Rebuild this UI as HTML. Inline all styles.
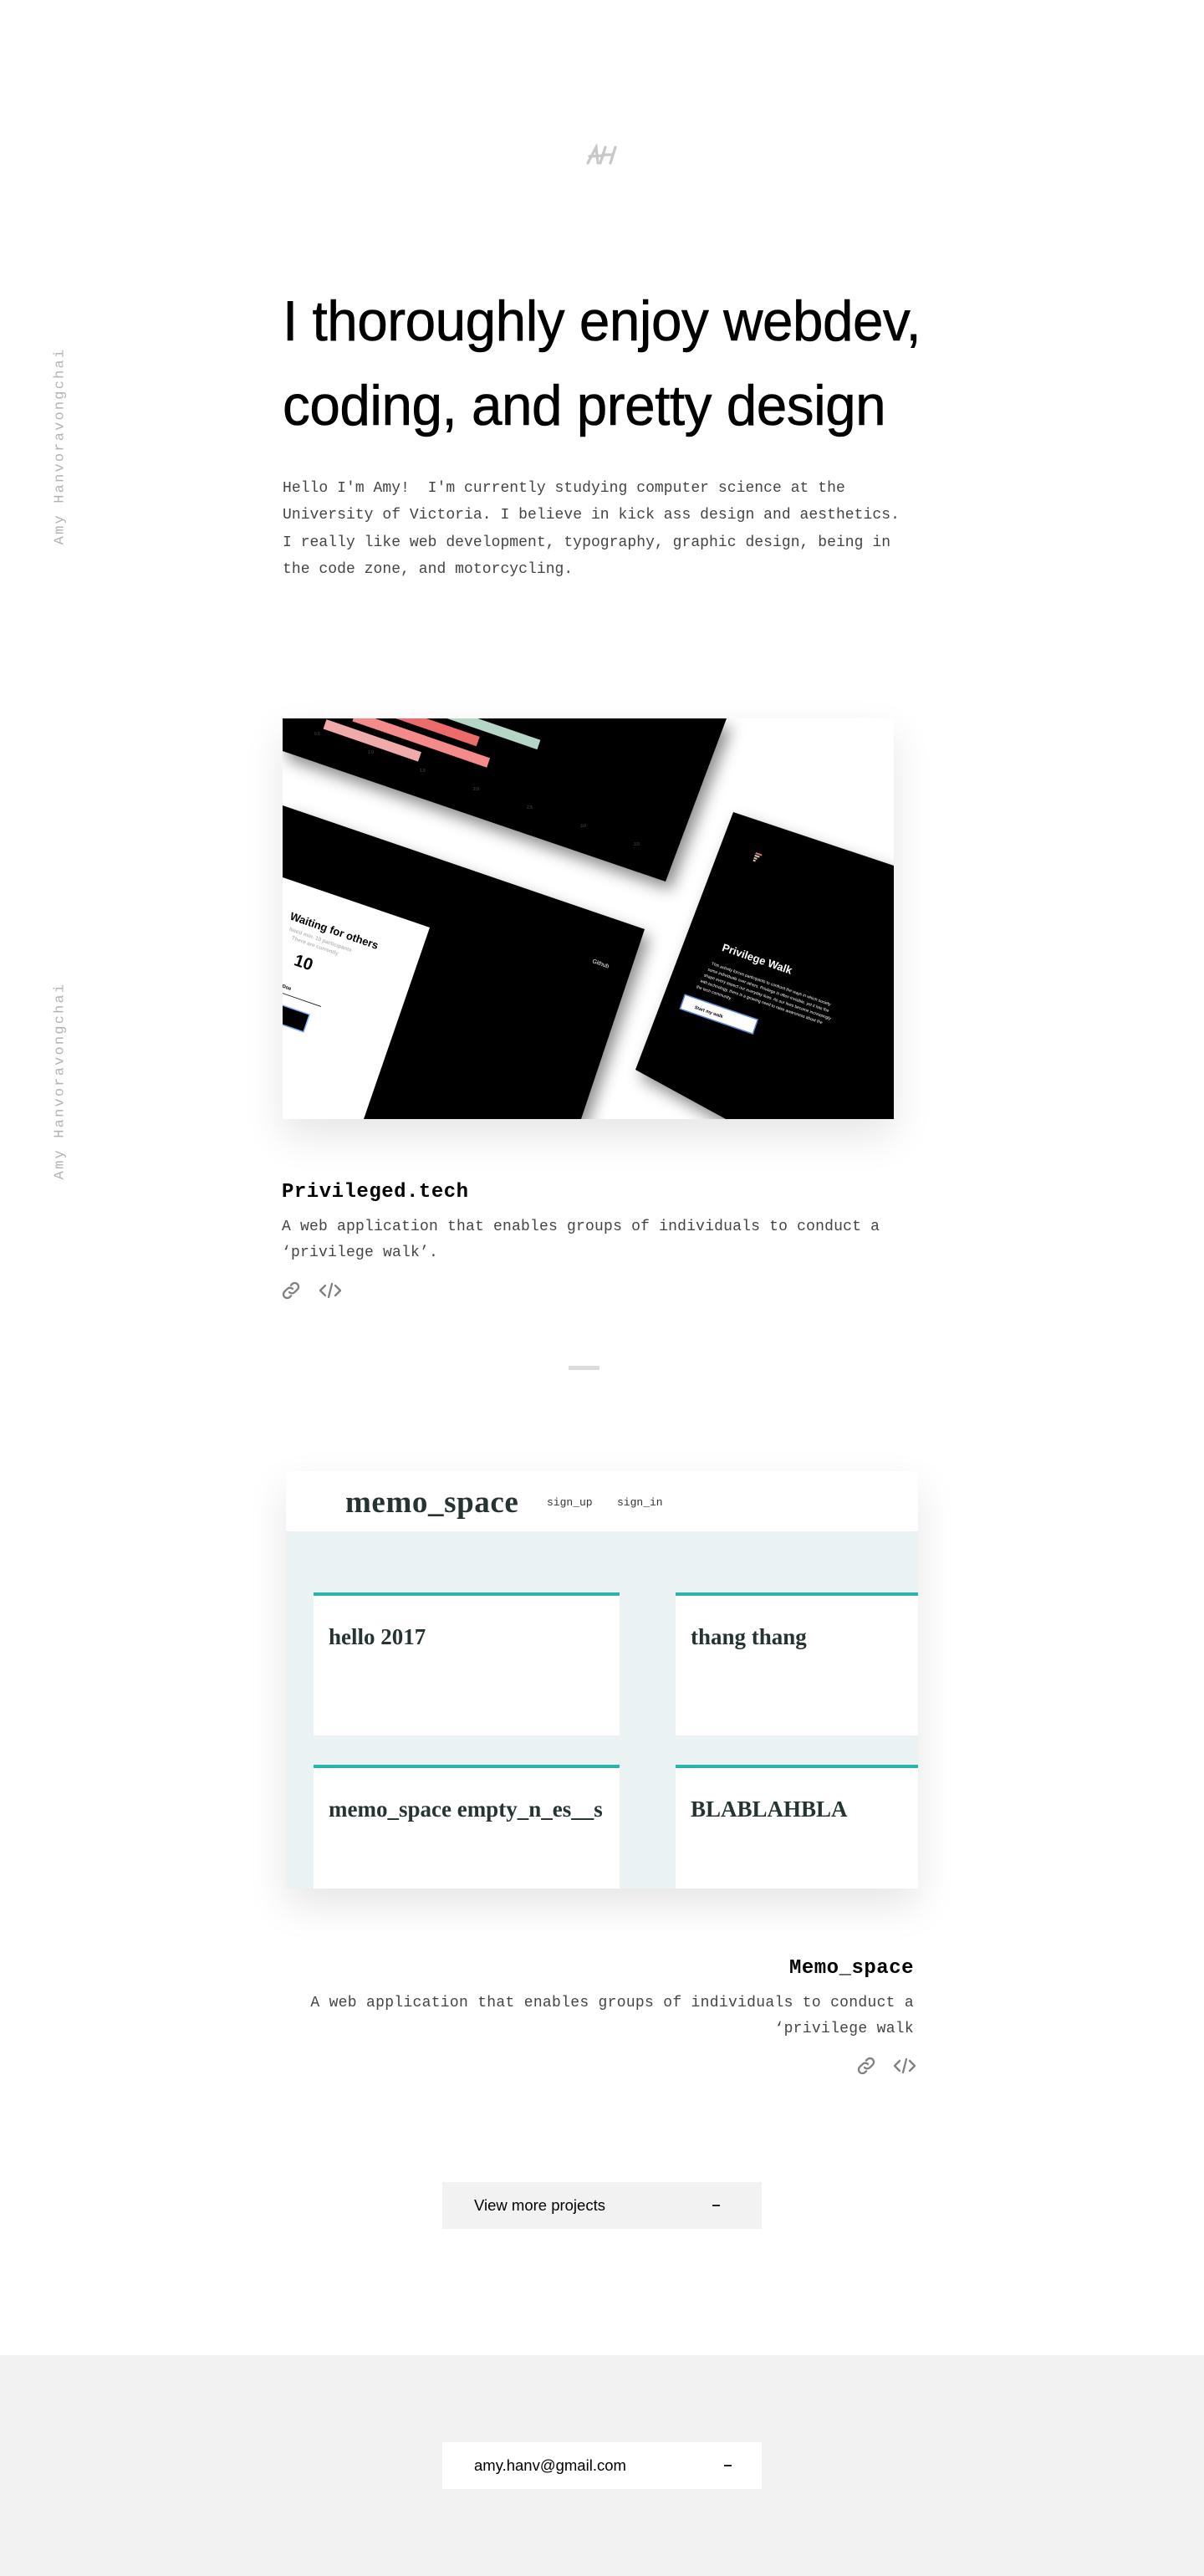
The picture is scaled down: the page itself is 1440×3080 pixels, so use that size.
<!DOCTYPE html>
<html><head><meta charset="utf-8">
<style>
*{margin:0;padding:0;box-sizing:border-box}
html,body{width:1440px;height:3080px;background:#fff;overflow:hidden}
body{position:relative;font-family:"Liberation Sans",sans-serif;color:#000}
.abs{position:absolute}
.vname{position:absolute;font-family:"Liberation Mono",monospace;font-size:17px;letter-spacing:2.2px;color:#b3b3b3;white-space:nowrap;width:240px;text-align:center;transform:rotate(-90deg);transform-origin:center center}
h1{position:absolute;left:338px;top:334px;font-weight:normal;font-size:68px;line-height:101px;white-space:nowrap;transform:scaleX(0.965);transform-origin:left top;letter-spacing:-0.5px;-webkit-text-stroke:0.6px #000}
.para{position:absolute;left:338px;top:568px;font-family:"Liberation Mono",monospace;font-size:18px;line-height:32.3px;color:#444;white-space:pre;letter-spacing:0.05px}
.ptitle{font-family:"Liberation Mono",monospace;font-size:24px;font-weight:bold;letter-spacing:0.5px;position:absolute;white-space:nowrap}
.pdesc{font-family:"Liberation Mono",monospace;font-size:18px;line-height:31px;color:#444;position:absolute;white-space:pre;letter-spacing:0.2px}
.btn{position:absolute;left:529px;width:382px;height:56px;font-size:18.5px;line-height:56px;padding-left:38px}
.btn .dash{position:absolute;left:323px;top:27px;width:9px;height:1.5px;background:#222}
.serif{font-family:"Liberation Serif",serif;font-weight:bold;color:#263333}
.card{position:absolute;background:#fff;border-top:4px solid #2bb3ae}
.card span{position:absolute;left:18px;font-size:27px;white-space:nowrap}
</style></head><body>

<svg class="abs" style="left:700px;top:172px" width="40" height="26" viewBox="0 0 40 26">
<g stroke="#c8c8c8" stroke-width="3.2" fill="none" stroke-linecap="round">
<path d="M3 23 L13 4 L15 23"/><path d="M5 15 L22 14"/><path d="M24 4 L18 23"/><path d="M36 4 L30 23"/><path d="M21 13 L33 13"/>
</g></svg>

<div class="vname" style="left:-48px;top:524px">Amy Hanvoravongchai</div>
<div class="vname" style="left:-48px;top:1283px">Amy Hanvoravongchai</div>

<h1>I thoroughly enjoy webdev,<br>coding, and pretty design</h1>

<div class="para">Hello I'm Amy!  I'm currently studying computer science at the
University of Victoria. I believe in kick ass design and aesthetics.
I really like web development, typography, graphic design, being in
the code zone, and motorcycling.</div>

<div class="abs" style="left:338px;top:859px;width:731px;height:479px;background:#fff;box-shadow:0 20px 45px rgba(0,0,0,0.10);overflow:hidden">
<svg width="731" height="479" viewBox="0 0 731 479">
<defs><filter id="sh" x="-20%" y="-20%" width="140%" height="140%"><feDropShadow dx="6" dy="10" stdDeviation="9" flood-opacity="0.45"/></filter></defs>
<polygon points="0,0 531,0 458,195 0,39" fill="#000" filter="url(#sh)"/>
<polygon points="0,104 433,252 357,479 0,479" fill="#000" filter="url(#sh)"/>
<polygon points="0,190 176,250 97,479 0,479" fill="#fff"/>
<polygon points="539,112 731,176 731,479 530,479 422,420" fill="#000" filter="url(#sh)"/>
<g transform="rotate(19)">
<rect x="50" y="-16" width="120" height="12" fill="#f0aaaa"/>
<rect x="80" y="-36" width="170" height="12" fill="#f58a8a"/>
<rect x="120" y="-56" width="110" height="12" fill="#ee6b6b"/>
<rect x="160" y="-76" width="140" height="12" fill="#b5d6c6"/>
</g>
<g fill="#555" font-size="5" font-family="Liberation Sans"><text x="38" y="20">0.5</text><text x="102" y="42">1.0</text><text x="164" y="64">1.5</text><text x="228" y="86">2.0</text><text x="292" y="108">2.5</text><text x="356" y="130">3.0</text><text x="420" y="152">3.5</text></g>
<g transform="translate(8,240) rotate(19)" font-family="Liberation Sans" font-weight="bold">
<text x="0" y="0" font-size="13" fill="#000">Waiting for others</text>
<text x="4" y="13" font-size="6.5" fill="#bbb">Need min. 10 participants</text>
<text x="10" y="22" font-size="6.5" fill="#bbb">There are currently</text>
<text x="22" y="50" font-size="20" fill="#000">10</text>
<text x="2" y="80" font-size="6" fill="#000">John Doe</text>
<rect x="-10" y="86" width="80" height="0.8" fill="#000"/>
<rect x="-40" y="100" width="100" height="22" fill="#000" stroke="#7fb0ff" stroke-width="1.5"/>
<text x="-14" y="114" font-size="7" fill="#fff">Start</text>
</g>
<text x="370" y="292" font-size="7" fill="#fff" font-family="Liberation Sans" transform="rotate(19 370 292)">Github</text>
<g transform="translate(528,268) rotate(19)" font-family="Liberation Sans" fill="#fff">
<text x="0" y="10" font-size="13" font-weight="bold">Privilege Walk</text>
<text x="-6" y="30" font-size="5">This activity forces participants to confront the ways in which society</text>
<text x="-8" y="38" font-size="5">some individuals over others. Privilege is often invisible, yet it has the</text>
<text x="-10" y="46" font-size="5">shape every aspect our everyday lives. As our lives become increasingly</text>
<text x="-12" y="54" font-size="5">with technology, there is a growing need to raise awareness about the</text>
<text x="-14" y="62" font-size="5">the tech community.</text>
<rect x="-24" y="74" width="92" height="18" fill="#fff" stroke="#5a88d8" stroke-width="1.5"/>
<text x="-8" y="86" font-size="5.5" fill="#000" font-weight="bold">Start my walk</text>
</g>
<g transform="translate(566,160) rotate(19)"><rect x="0" y="0" width="8" height="2" fill="#ee6b6b"/><rect x="0" y="3" width="6" height="2" fill="#b5d6c6"/><rect x="0" y="6" width="4" height="2" fill="#f0aaaa"/><rect x="0" y="9" width="3" height="2" fill="#e8d48a"/></g>
</svg>
</div>

<div class="ptitle" style="left:337px;top:1412px">Privileged.tech</div>
<div class="pdesc" style="left:337px;top:1452px">A web application that enables groups of individuals to conduct a
‘privilege walk’.</div>

<svg class="abs" style="left:336px;top:1531px" width="24" height="24" viewBox="0 0 24 24" fill="none" stroke="#808080" stroke-width="2.3" stroke-linecap="round">
<path d="M10 14 a4.5 4.5 0 0 0 6.4 0 l3.3-3.3 a4.5 4.5 0 0 0-6.4-6.4 l-1.4 1.4"/>
<path d="M14 10 a4.5 4.5 0 0 0-6.4 0 l-3.3 3.3 a4.5 4.5 0 0 0 6.4 6.4 l1.4-1.4"/>
</svg>
<svg class="abs" style="left:381px;top:1532px" width="28" height="22" viewBox="0 0 28 22" fill="none" stroke="#808080" stroke-width="2.3" stroke-linecap="round" stroke-linejoin="round">
<path d="M8 5 L2 11 L8 17"/><path d="M20 5 L26 11 L20 17"/><path d="M16 3 L12 19"/>
</svg>

<div class="abs" style="left:680px;top:1633px;width:37px;height:5px;background:#dcdcdc"></div>

<div class="abs" style="left:342px;top:1759px;width:756px;height:499px;background:#ebf2f3;box-shadow:0 20px 45px rgba(0,0,0,0.10);overflow:hidden">
<div class="abs" style="left:0;top:0;width:756px;height:72px;background:#fff">
<div class="abs serif" style="left:71px;top:16px;font-size:37px;letter-spacing:0.6px">memo_space</div>
<div class="abs" style="left:312px;top:30px;font-family:'Liberation Mono',monospace;font-size:13px;color:#333">sign_up</div>
<div class="abs" style="left:396px;top:30px;font-family:'Liberation Mono',monospace;font-size:13px;color:#333">sign_in</div>
</div>
<div class="card" style="left:33px;top:145px;width:366px;height:171px"><span class="serif" style="top:34px">hello 2017</span></div>
<div class="card" style="left:466px;top:145px;width:300px;height:171px"><span class="serif" style="top:34px">thang thang</span></div>
<div class="card" style="left:33px;top:351px;width:366px;height:160px"><span class="serif" style="top:34px">memo_space empty_n_es__s</span></div>
<div class="card" style="left:466px;top:351px;width:300px;height:160px"><span class="serif" style="top:34px">BLABLAHBLA</span></div>
</div>

<div class="ptitle" style="right:347px;top:2340px">Memo_space</div>
<div class="pdesc" style="right:347px;top:2380px;text-align:right;letter-spacing:0.3px">A web application that enables groups of individuals to conduct a
‘privilege walk</div>

<svg class="abs" style="left:1024px;top:2458px" width="24" height="24" viewBox="0 0 24 24" fill="none" stroke="#808080" stroke-width="2.3" stroke-linecap="round">
<path d="M10 14 a4.5 4.5 0 0 0 6.4 0 l3.3-3.3 a4.5 4.5 0 0 0-6.4-6.4 l-1.4 1.4"/>
<path d="M14 10 a4.5 4.5 0 0 0-6.4 0 l-3.3 3.3 a4.5 4.5 0 0 0 6.4 6.4 l1.4-1.4"/>
</svg>
<svg class="abs" style="left:1068px;top:2459px" width="28" height="22" viewBox="0 0 28 22" fill="none" stroke="#808080" stroke-width="2.3" stroke-linecap="round" stroke-linejoin="round">
<path d="M8 5 L2 11 L8 17"/><path d="M20 5 L26 11 L20 17"/><path d="M16 3 L12 19"/>
</svg>

<div class="btn" style="top:2609px;background:#f2f2f2">View more projects<div class="dash"></div></div>

<div class="abs" style="left:0;top:2816px;width:1440px;height:264px;background:#f2f2f2"></div>
<div class="btn" style="top:2920px;background:#fff">amy.hanv@gmail.com<div class="dash" style="left:337px"></div></div>

</body></html>
